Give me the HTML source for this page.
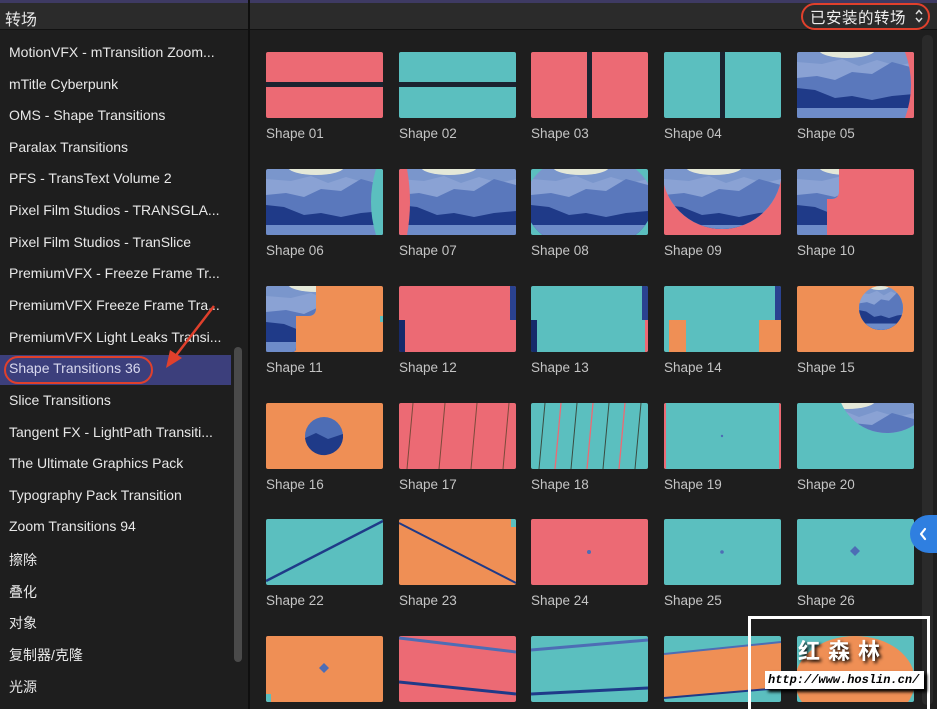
<!DOCTYPE html>
<html><head><meta charset="utf-8">
<style>
*{margin:0;padding:0;box-sizing:border-box}
body{width:937px;height:709px;overflow:hidden;background:#1e1e1e;font-family:"Liberation Sans","Noto Sans CJK SC",sans-serif;position:relative}
.top{position:absolute;left:0;top:0;width:937px;height:3px;background:#3e3a63}
.hdr{position:absolute;top:3px;height:27px;background:#2b2b2b;border-bottom:1px solid #111}
.side{position:absolute;left:0;top:31px;width:248px;height:678px;background:#1e1e1e}
.div{position:absolute;left:248px;top:0;width:2px;height:709px;background:#0f0f0f}
.it{position:absolute;left:9px;font-size:14px;color:#e8e8e8;white-space:nowrap}
.sel{position:absolute;left:0;top:355px;width:231px;height:30px;background:#3c3f7c}
.th{position:absolute;width:117px;height:66px;border-radius:2px;overflow:hidden}
.th svg{display:block}
.lb{position:absolute;font-size:13.5px;color:#c4c4c4}
</style></head><body>
<div class="top"></div>
<div class="hdr" style="left:0;width:248px"></div>
<div class="hdr" style="left:250px;width:687px"></div>
<div style="position:absolute;left:5px;top:6px;font-size:16px;color:#e6e6e6">转场</div>
<div style="position:absolute;left:801px;top:3px;width:129px;height:27px;border:2px solid #e0402c;border-radius:14px"></div>
<div style="position:absolute;left:810px;top:6px;font-size:15.5px;color:#eee;letter-spacing:0.5px">已安装的转场</div>
<svg style="position:absolute;left:914px;top:8px" width="10" height="16"><path d="M2,6 L5,2.5 L8,6 M2,10 L5,13.5 L8,10" fill="none" stroke="#ddd" stroke-width="1.4"/></svg>

<div class="side"></div>
<div class="sel"></div>
<div style="position:absolute;left:4px;top:356px;width:149px;height:28px;border:2px solid #e0402c;border-radius:14px"></div>
<div class="it" style="top:44px">MotionVFX - mTransition Zoom...</div>
<div class="it" style="top:76px">mTitle Cyberpunk</div>
<div class="it" style="top:107px">OMS - Shape Transitions</div>
<div class="it" style="top:139px">Paralax Transitions</div>
<div class="it" style="top:170px">PFS - TransText Volume 2</div>
<div class="it" style="top:202px">Pixel Film Studios - TRANSGLA...</div>
<div class="it" style="top:234px">Pixel Film Studios - TranSlice</div>
<div class="it" style="top:265px">PremiumVFX - Freeze Frame Tr...</div>
<div class="it" style="top:297px">PremiumVFX Freeze Frame Tra...</div>
<div class="it" style="top:329px">PremiumVFX Light Leaks Transi...</div>
<div class="it" style="top:360px;color:#d8d8ee">Shape Transitions 36</div>
<div class="it" style="top:392px">Slice Transitions</div>
<div class="it" style="top:424px">Tangent FX - LightPath Transiti...</div>
<div class="it" style="top:455px">The Ultimate Graphics Pack</div>
<div class="it" style="top:487px">Typography Pack Transition</div>
<div class="it" style="top:518px">Zoom Transitions 94</div>
<div class="it" style="top:550px">擦除</div>
<div class="it" style="top:582px">叠化</div>
<div class="it" style="top:613px">对象</div>
<div class="it" style="top:645px">复制器/克隆</div>
<div class="it" style="top:677px">光源</div>
<div style="position:absolute;left:234px;top:347px;width:8px;height:315px;border-radius:4px;background:#4a4a4a"></div>
<svg style="position:absolute;left:160px;top:300px" width="60" height="70"><line x1="54" y1="6" x2="14" y2="58" stroke="#e0402c" stroke-width="2.5"/><polygon points="6,68 10,50 22,58" fill="#e0402c"/></svg>
<div class="div"></div>
<div style="position:absolute;left:922px;top:35px;width:11px;height:670px;border-radius:5px;background:#2a2a2a"></div>

<svg width="0" height="0" style="position:absolute">
<defs>
<g id="m">
<rect width="117" height="66" fill="#7a96cc"/>
<ellipse cx="50" cy="-2" rx="28" ry="8" fill="#e4e8d8"/>
<polygon points="0,10 25,12 45,7 62,14 80,8 100,14 117,10 117,66 0,66" fill="#8aa2d4"/>
<polygon points="0,26 20,24 38,28 55,20 75,22 95,10 117,16 117,66 0,66" fill="#5a78bc"/>
<polygon points="0,36 18,38 38,46 55,44 75,48 95,44 117,42 117,66 0,66" fill="#1f3a88"/>
<rect y="56" width="117" height="10" fill="#6e8cc9"/>
</g>
</defs></svg>

<!-- row 1 -->
<div class="th" style="left:266px;top:52px"><svg width="117" height="66"><rect width="117" height="66" fill="#ec6a74"/><rect y="30" width="117" height="5" fill="#1b2330"/></svg></div>
<div class="th" style="left:399px;top:52px"><svg width="117" height="66"><rect width="117" height="66" fill="#5bbfbf"/><rect y="30" width="117" height="5" fill="#1b2330"/></svg></div>
<div class="th" style="left:531px;top:52px"><svg width="117" height="66"><rect width="117" height="66" fill="#ec6a74"/><rect x="56" width="5" height="66" fill="#1b2330"/></svg></div>
<div class="th" style="left:664px;top:52px"><svg width="117" height="66"><rect width="117" height="66" fill="#5bbfbf"/><rect x="56" width="5" height="66" fill="#1b2330"/></svg></div>
<div class="th" style="left:797px;top:52px"><svg width="117" height="66"><use href="#m"/><path d="M117,0 L108,0 Q120,33 108,66 L117,66Z" fill="#ec6a74"/></svg></div>
<!-- row 2 -->
<div class="th" style="left:266px;top:169px"><svg width="117" height="66"><use href="#m"/><path d="M117,0 L110,0 Q100,33 110,66 L117,66Z" fill="#5bbfbf"/></svg></div>
<div class="th" style="left:399px;top:169px"><svg width="117" height="66"><use href="#m"/><path d="M0,0 L8,0 Q14,33 8,66 L0,66Z" fill="#ec6a74"/></svg></div>
<div class="th" style="left:531px;top:169px"><svg width="117" height="66"><rect width="117" height="66" fill="#5bbfbf"/><clipPath id="c8"><ellipse cx="58" cy="33" rx="64" ry="48"/></clipPath><use href="#m" clip-path="url(#c8)"/></svg></div>
<div class="th" style="left:664px;top:169px"><svg width="117" height="66"><rect width="117" height="66" fill="#ec6a74"/><clipPath id="c9"><circle cx="58" cy="0" r="60"/></clipPath><use href="#m" clip-path="url(#c9)"/></svg></div>
<div class="th" style="left:797px;top:169px"><svg width="117" height="66"><rect width="117" height="66" fill="#ec6a74"/><clipPath id="c10"><path d="M0,0 H42 V22 Q42,30 34,30 H30 V66 H0Z"/></clipPath><use href="#m" clip-path="url(#c10)"/></svg></div>
<!-- row 3 -->
<div class="th" style="left:266px;top:286px"><svg width="117" height="66"><rect width="117" height="66" fill="#ef8f55"/><clipPath id="c11"><path d="M0,0 H50 V22 Q50,30 42,30 H30 V62 Q30,66 26,66 H0Z"/></clipPath><use href="#m" clip-path="url(#c11)"/><rect x="114" y="30" width="3" height="6" fill="#5bbfbf"/></svg></div>
<div class="th" style="left:399px;top:286px"><svg width="117" height="66"><rect width="117" height="66" fill="#ec6a74"/><rect x="111" width="6" height="34" fill="#2a4290"/><rect y="34" width="6" height="32" fill="#162a6a"/></svg></div>
<div class="th" style="left:531px;top:286px"><svg width="117" height="66"><rect width="117" height="66" fill="#5bbfbf"/><rect x="111" width="6" height="34" fill="#2a4290"/><rect y="34" width="6" height="32" fill="#162a6a"/><rect x="114" y="34" width="3" height="32" fill="#ec6a74"/></svg></div>
<div class="th" style="left:664px;top:286px"><svg width="117" height="66"><rect width="117" height="66" fill="#5bbfbf"/><rect x="5" y="34" width="17" height="32" fill="#ef8f55"/><rect x="95" y="34" width="22" height="32" fill="#ef8f55"/><rect x="111" width="6" height="34" fill="#2a4290"/></svg></div>
<div class="th" style="left:797px;top:286px"><svg width="117" height="66"><rect width="117" height="66" fill="#ef8f55"/><clipPath id="c15"><circle cx="84" cy="22" r="22"/></clipPath><g clip-path="url(#c15)"><use href="#m" transform="translate(62,0) scale(0.4,0.67)"/></g></svg></div>
<!-- row 4 -->
<div class="th" style="left:266px;top:403px"><svg width="117" height="66"><rect width="117" height="66" fill="#ef8f55"/><circle cx="58" cy="33" r="19" fill="#4d6db5"/><path d="M39,35 L50,30 L62,36 L77,31 A19,19 0 0 1 39,35Z" fill="#1f3a88"/></svg></div>
<div class="th" style="left:399px;top:403px"><svg width="117" height="66"><rect width="117" height="66" fill="#ec6a74"/><g stroke="#7a4a3a" stroke-width="1"><line x1="14" y1="0" x2="8" y2="66"/><line x1="46" y1="0" x2="40" y2="66"/><line x1="78" y1="0" x2="72" y2="66"/><line x1="110" y1="0" x2="104" y2="66"/></g></svg></div>
<div class="th" style="left:531px;top:403px"><svg width="117" height="66"><rect width="117" height="66" fill="#5bbfbf"/><g stroke="#ec6a74" stroke-width="1.3"><line x1="30" y1="0" x2="24" y2="66"/><line x1="62" y1="0" x2="56" y2="66"/><line x1="94" y1="0" x2="88" y2="66"/></g><g stroke="#3a4a40" stroke-width="1"><line x1="14" y1="0" x2="8" y2="66"/><line x1="46" y1="0" x2="40" y2="66"/><line x1="78" y1="0" x2="72" y2="66"/><line x1="110" y1="0" x2="104" y2="66"/></g></svg></div>
<div class="th" style="left:664px;top:403px"><svg width="117" height="66"><rect width="117" height="66" fill="#5bbfbf"/><rect x="0" width="2" height="66" fill="#ec6a74"/><rect x="115" width="2" height="66" fill="#ec6a74"/><circle cx="58" cy="33" r="1.2" fill="#4d6db5"/></svg></div>
<div class="th" style="left:797px;top:403px"><svg width="117" height="66"><rect width="117" height="66" fill="#5bbfbf"/><clipPath id="c20"><circle cx="90" cy="-20" r="50"/></clipPath><use href="#m" clip-path="url(#c20)"/></svg></div>
<!-- row 5 -->
<div class="th" style="left:266px;top:519px"><svg width="117" height="66"><rect width="117" height="66" fill="#5bbfbf"/><line x1="0" y1="62" x2="117" y2="2" stroke="#1f3a88" stroke-width="2.5"/></svg></div>
<div class="th" style="left:399px;top:519px"><svg width="117" height="66"><rect width="117" height="66" fill="#ef8f55"/><line x1="0" y1="4" x2="117" y2="64" stroke="#1f3a88" stroke-width="2"/><rect x="112" width="5" height="8" fill="#5bbfbf"/></svg></div>
<div class="th" style="left:531px;top:519px"><svg width="117" height="66"><rect width="117" height="66" fill="#ec6a74"/><circle cx="58" cy="33" r="2" fill="#4d6db5"/></svg></div>
<div class="th" style="left:664px;top:519px"><svg width="117" height="66"><rect width="117" height="66" fill="#5bbfbf"/><circle cx="58" cy="33" r="1.8" fill="#4d6db5"/></svg></div>
<div class="th" style="left:797px;top:519px"><svg width="117" height="66"><rect width="117" height="66" fill="#5bbfbf"/><polygon points="58,27 63,32 58,37 53,32" fill="#4d6db5"/></svg></div>
<!-- row 6 -->
<div class="th" style="left:266px;top:636px"><svg width="117" height="66"><rect width="117" height="66" fill="#ef8f55"/><polygon points="58,27 63,32 58,37 53,32" fill="#4d6db5"/><rect x="0" y="58" width="5" height="8" fill="#5bbfbf"/></svg></div>
<div class="th" style="left:399px;top:636px"><svg width="117" height="66"><rect width="117" height="66" fill="#ec6a74"/><line x1="0" y1="2" x2="117" y2="16" stroke="#4d6db5" stroke-width="3"/><line x1="0" y1="46" x2="117" y2="58" stroke="#1f3a88" stroke-width="3"/></svg></div>
<div class="th" style="left:531px;top:636px"><svg width="117" height="66"><rect width="117" height="66" fill="#5bbfbf"/><line x1="0" y1="14" x2="117" y2="4" stroke="#4d6db5" stroke-width="3"/><line x1="0" y1="58" x2="117" y2="52" stroke="#1f3a88" stroke-width="3"/></svg></div>
<div class="th" style="left:664px;top:636px"><svg width="117" height="66"><rect width="117" height="66" fill="#5bbfbf"/><polygon points="0,18 117,6 117,52 0,62" fill="#ef8f55"/><line x1="0" y1="18" x2="117" y2="6" stroke="#4d6db5" stroke-width="2"/><line x1="0" y1="62" x2="117" y2="52" stroke="#1f3a88" stroke-width="2"/></svg></div>
<div class="th" style="left:797px;top:636px"><svg width="117" height="66"><rect width="117" height="66" fill="#5bbfbf"/><ellipse cx="58" cy="45" rx="60" ry="45" fill="#ef8f55"/></svg></div>

<div class="lb" style="left:266px;top:126px">Shape 01</div>
<div class="lb" style="left:399px;top:126px">Shape 02</div>
<div class="lb" style="left:531px;top:126px">Shape 03</div>
<div class="lb" style="left:664px;top:126px">Shape 04</div>
<div class="lb" style="left:797px;top:126px">Shape 05</div>
<div class="lb" style="left:266px;top:243px">Shape 06</div>
<div class="lb" style="left:399px;top:243px">Shape 07</div>
<div class="lb" style="left:531px;top:243px">Shape 08</div>
<div class="lb" style="left:664px;top:243px">Shape 09</div>
<div class="lb" style="left:797px;top:243px">Shape 10</div>
<div class="lb" style="left:266px;top:360px">Shape 11</div>
<div class="lb" style="left:399px;top:360px">Shape 12</div>
<div class="lb" style="left:531px;top:360px">Shape 13</div>
<div class="lb" style="left:664px;top:360px">Shape 14</div>
<div class="lb" style="left:797px;top:360px">Shape 15</div>
<div class="lb" style="left:266px;top:477px">Shape 16</div>
<div class="lb" style="left:399px;top:477px">Shape 17</div>
<div class="lb" style="left:531px;top:477px">Shape 18</div>
<div class="lb" style="left:664px;top:477px">Shape 19</div>
<div class="lb" style="left:797px;top:477px">Shape 20</div>
<div class="lb" style="left:266px;top:593px">Shape 22</div>
<div class="lb" style="left:399px;top:593px">Shape 23</div>
<div class="lb" style="left:531px;top:593px">Shape 24</div>
<div class="lb" style="left:664px;top:593px">Shape 25</div>
<div class="lb" style="left:797px;top:593px">Shape 26</div>

<div style="position:absolute;left:910px;top:515px;width:30px;height:38px;border-radius:19px 0 0 19px;background:#2f7fe0"></div>
<svg style="position:absolute;left:918px;top:527px" width="10" height="14"><path d="M7,2 L3,7 L7,12" fill="none" stroke="#fff" stroke-width="2.2" stroke-linecap="round" stroke-linejoin="round"/></svg>

<!-- watermark -->
<div style="position:absolute;left:748px;top:616px;width:182px;height:93px;border:3px solid #fff;border-bottom:none"></div>
<div style="position:absolute;left:798px;top:634px;font-size:22px;font-weight:bold;color:#fff;letter-spacing:8px;text-shadow:2px 2px 3px #000">红森林</div>
<div style="position:absolute;left:765px;top:671px;width:159px;height:18px;background:#fff;box-shadow:3px 3px 3px #000"></div>
<div style="position:absolute;left:768px;top:673px;font-size:12px;font-family:'Liberation Mono',monospace;font-style:italic;font-weight:bold;color:#000">http://www.hoslin.cn/</div>
</body></html>
